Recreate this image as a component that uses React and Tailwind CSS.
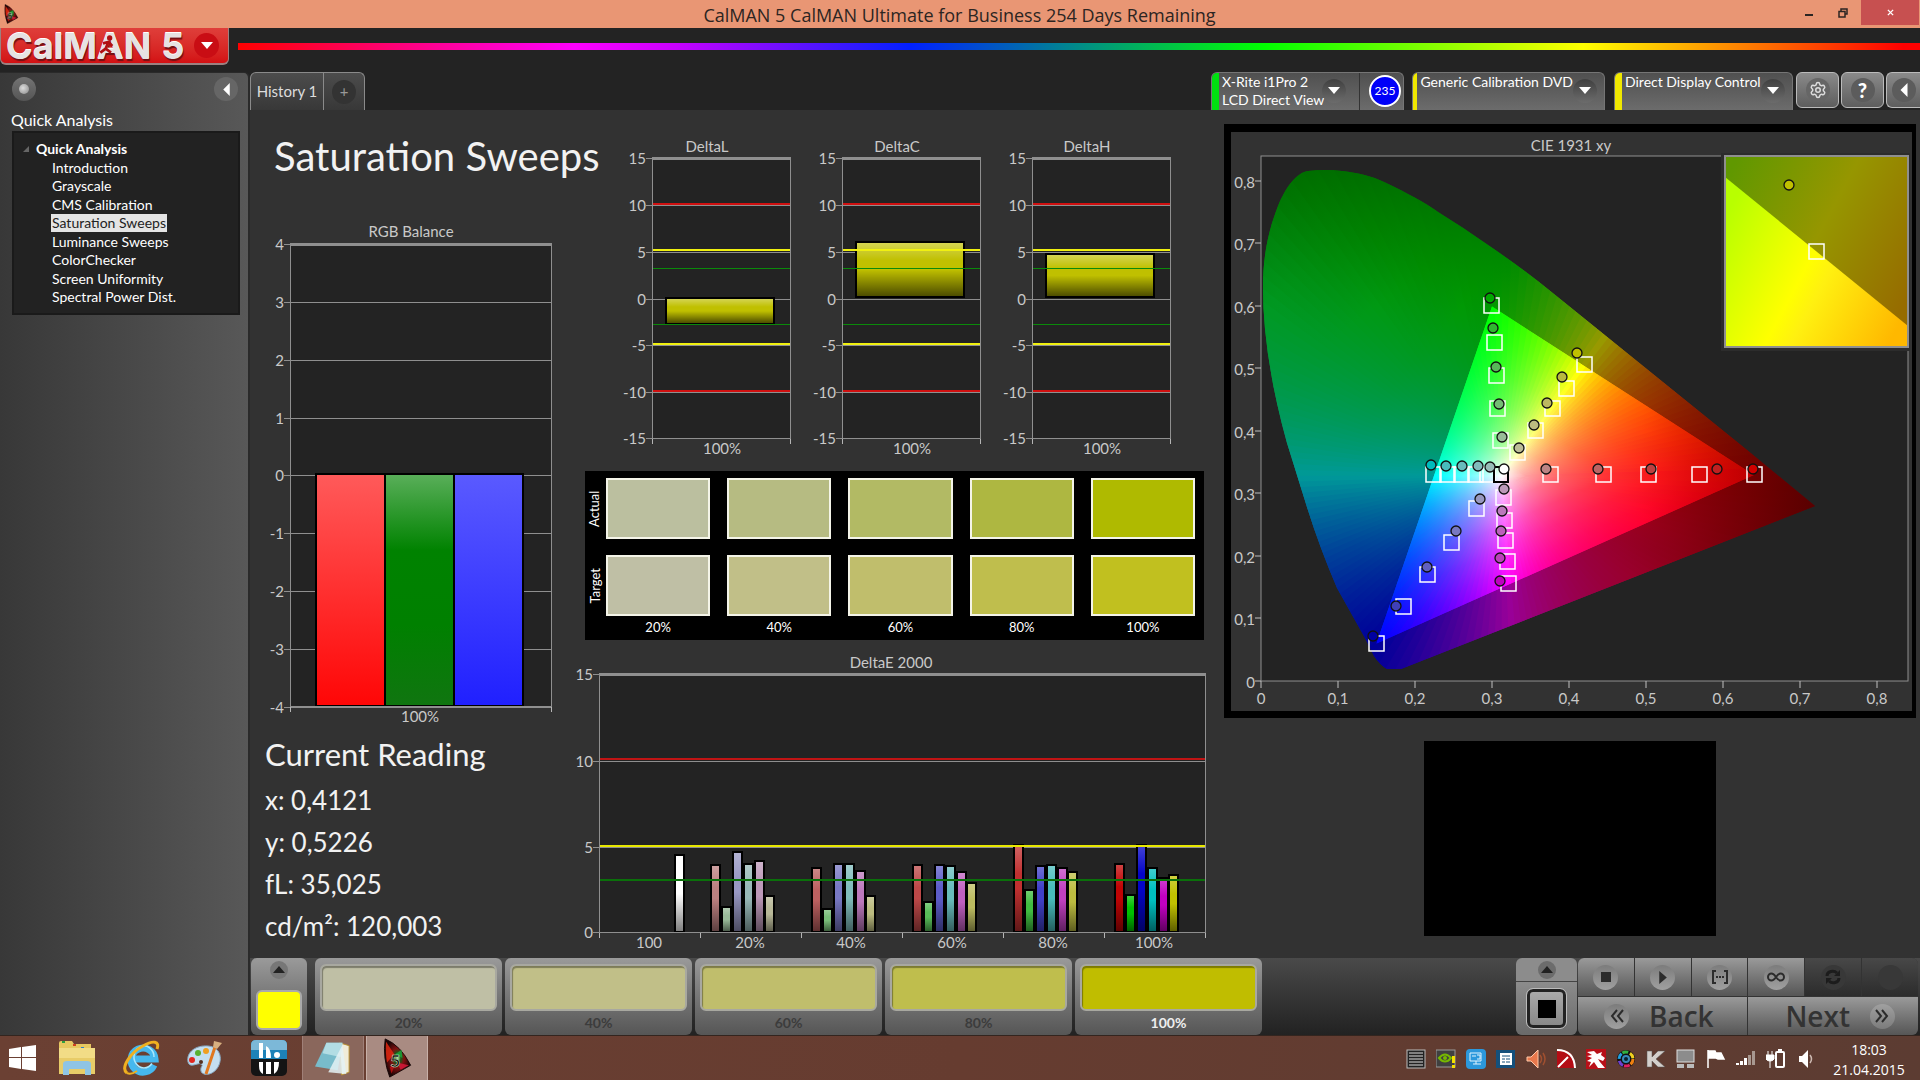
import React from "react";
import { Settings } from "lucide-react";

const PLOT = "#232323";
const LINE = "#8f8f8f";

/* ---------- shared chart parts ---------- */

function Shade({ id, top = 0.32, bottom = 0.6 }) {
  return (
    <linearGradient id={id} x1="0" y1="0" x2="0" y2="1">
      <stop offset="0" stopColor="#fff" stopOpacity={top} />
      <stop offset="0.33" stopColor="#fff" stopOpacity="0" />
      <stop offset="0.5" stopColor="#000" stopOpacity="0" />
      <stop offset="1" stopColor="#000" stopOpacity={bottom} />
    </linearGradient>
  );
}

function Bar({ x, y, w, h, color, shade }) {
  return (
    <g>
      <rect x={x} y={y} width={w} height={h} fill={color} stroke="#000" strokeWidth="2" />
      <rect x={x + 1} y={y + 1} width={w - 2} height={h - 2} fill={`url(#${shade})`} />
    </g>
  );
}

function Axis({ x1, x2, ticks, bottom, xticks }) {
  return (
    <g>
      <rect x={x1} y={ticks[0].y} width={x2 - x1} height={bottom - ticks[0].y} fill={PLOT} />
      {ticks.map((t) => (
        <g key={t.label}>
          <line x1={x1 - 6} x2={x2} y1={t.y} y2={t.y} stroke={LINE} />
          <text x={x1 - 6} y={t.y + 6} textAnchor="end" fill="#c9c9c9" className="text-[15px]">
            {t.label}
          </text>
        </g>
      ))}
      <line x1={x1} x2={x2} y1={ticks[0].y} y2={ticks[0].y} stroke={LINE} strokeWidth="3" />
      {xticks.map((x) => (
        <line key={x} x1={x} x2={x} y1={bottom} y2={bottom + 6} stroke="#b5b5b5" />
      ))}
    </g>
  );
}

function Frame({ x1, x2, top, bottom }) {
  return <path d={`M${x1} ${top}V${bottom}H${x2}V${top}`} fill="none" stroke={LINE} strokeWidth="1" />;
}

/* ---------- RGB balance ---------- */

function RgbBalance() {
  const ticks = [4, 3, 2, 1, 0, -1, -2, -3, -4].map((v) => ({ label: v, y: 24 + (4 - v) * 58 - (v < 1 ? 1 : 0) }));
  return (
    <svg viewBox="0 0 320 504" className="mt-10 block w-full" shapeRendering="crispEdges">
      <defs>
        <linearGradient id="rb-r" x1="0" y1="0" x2="0" y2="1">
          <stop offset="0" stopColor="#ff5a5a" />
          <stop offset="1" stopColor="#ff0606" />
        </linearGradient>
        <linearGradient id="rb-g" x1="0" y1="0" x2="0" y2="1">
          <stop offset="0" stopColor="#5aaf5a" />
          <stop offset="0.33" stopColor="#008200" />
          <stop offset="0.65" stopColor="#008000" />
          <stop offset="1" stopColor="#107510" />
        </linearGradient>
        <linearGradient id="rb-b" x1="0" y1="0" x2="0" y2="1">
          <stop offset="0" stopColor="#5a5aff" />
          <stop offset="1" stopColor="#2020ff" />
        </linearGradient>
      </defs>
      <text x="161" y="17" textAnchor="middle" fill="#c9c9c9" className="text-[15px]">RGB Balance</text>
      <Axis x1={40} x2={301} ticks={ticks} bottom={486} xticks={[40, 301]} />
      <rect x="66" y="254" width="69" height="232" fill="url(#rb-r)" stroke="#000" strokeWidth="2" />
      <rect x="135" y="254" width="69" height="232" fill="url(#rb-g)" stroke="#000" strokeWidth="2" />
      <rect x="204" y="254" width="69" height="232" fill="url(#rb-b)" stroke="#000" strokeWidth="2" />
      <Frame x1={40} x2={301} top={23} bottom={486} />
      <text x="170" y="502" textAnchor="middle" fill="#c9c9c9" className="text-[15px]">100%</text>
    </svg>
  );
}

/* ---------- Delta L / C / H ---------- */

function DeltaChart({ title, y, h }) {
  const ticks = [15, 10, 5, 0, -5, -10, -15].map((v, i) => ({
    label: v,
    y: [22, 69, 116, 163, 209, 256, 302][i],
  }));
  const id = `d-${title}`;
  return (
    <svg viewBox="0 0 190 324" className="block w-1/3" shapeRendering="crispEdges">
      <defs>
        <Shade id={id} />
      </defs>
      <text x="91" y="16" textAnchor="middle" fill="#c9c9c9" className="text-[15px]">{title}</text>
      <Axis x1={36} x2={174} ticks={ticks} bottom={302} xticks={[36, 174]} />
      <Bar x={50} y={y} w={108} h={h} color="#c0c000" shade={id} />
      <rect x="36" y="67" width="138" height="2" fill="#d01010" />
      <rect x="36" y="113" width="138" height="2" fill="#f0f010" />
      <rect x="36" y="132" width="138" height="1" fill="#0a8a0a" />
      <rect x="36" y="188" width="138" height="1" fill="#0a8a0a" />
      <rect x="36" y="207" width="138" height="2" fill="#f0f010" />
      <rect x="36" y="254" width="138" height="2" fill="#d01010" />
      <Frame x1={36} x2={174} top={21} bottom={302} />
      <text x="106" y="318" textAnchor="middle" fill="#c9c9c9" className="text-[15px]">100%</text>
    </svg>
  );
}

/* ---------- swatch comparison ---------- */

const swatches = [
  { label: "20%", actual: "bg-[#bbbf9f]", target: "bg-[#bfbfa5]" },
  { label: "40%", actual: "bg-[#b6bb82]", target: "bg-[#c1bf88]" },
  { label: "60%", actual: "bg-[#b2ba64]", target: "bg-[#c0be6c]" },
  { label: "80%", actual: "bg-[#aeb741]", target: "bg-[#bfbe4d]" },
  { label: "100%", actual: "bg-[#afba00]", target: "bg-[#c1c01f]" },
];

function Swatches() {
  return (
    <div className="mr-[13px] ml-[15px] mt-[11px] flex h-[169px] bg-black text-[13px] text-white">
      <div className="flex w-[21px] flex-col gap-4 pt-[7px]">
        <div className="flex h-[61px] items-center justify-center">
          <span className="-rotate-90">Actual</span>
        </div>
        <div className="flex h-[61px] items-center justify-center">
          <span className="-rotate-90">Target</span>
        </div>
      </div>
      <div className="grid flex-1 grid-cols-5 gap-[17px] pr-[9px] pt-[7px]">
        {swatches.map((s) => (
          <div key={s.label} className="flex flex-col">
            <div className={`h-[61px] border-2 border-[#f4f4e8] ${s.actual}`} />
            <div className={`mt-4 h-[61px] border-2 border-[#f4f4e8] ${s.target}`} />
            <div className="mt-px text-center leading-5">{s.label}</div>
          </div>
        ))}
      </div>
    </div>
  );
}

/* ---------- Delta E 2000 ---------- */

const deGroups = [
  { label: "20%", tops: [215, 257, 202, 214, 211, 246], colors: ["#bc8080", "#98ba98", "#9898c4", "#98b8b8", "#bc98b8", "#b8b898"] },
  { label: "40%", tops: [218, 259, 214, 214, 221, 246], colors: ["#bc6060", "#78bc78", "#7878c4", "#80bcbc", "#bc78bc", "#bcbc80"] },
  { label: "60%", tops: [215, 252, 215, 216, 222, 233], colors: ["#bc4848", "#58bc58", "#5c5cc8", "#68bcbc", "#c060c0", "#bcbc60"] },
  { label: "80%", tops: [195, 240, 216, 215, 218, 222], colors: ["#c03030", "#40bc40", "#4040c8", "#48bcbc", "#c040c0", "#bcbc40"] },
  { label: "100%", tops: [214, 245, 195, 218, 228, 225], colors: ["#c00404", "#00c000", "#0404c8", "#00c0c0", "#c000c0", "#c0c000"] },
];

function DeltaE() {
  const ticks = [
    { label: 15, y: 24 },
    { label: 10, y: 111 },
    { label: 5, y: 197 },
    { label: 0, y: 282 },
  ];
  const offs = [11, 22, 33, 44, 55, 65];
  return (
    <svg viewBox="0 0 647 305" className="mt-[10px] block w-full" shapeRendering="crispEdges">
      <defs>
        <Shade id="de" top={0.25} bottom={0.5} />
      </defs>
      <text x="321" y="18" textAnchor="middle" fill="#c9c9c9" className="text-[15px]">DeltaE 2000</text>
      <Axis x1={29} x2={635} ticks={ticks} bottom={282} xticks={[29, 130, 231, 332, 433, 534, 635]} />
      <Bar x={105} y={205} w={9} h={77} color="#ffffff" shade="de" />
      {deGroups.map((g, i) =>
        g.tops.map((t, j) => (
          <Bar key={g.label + j} x={130 + i * 101 + offs[j]} y={t} w={9} h={282 - t} color={g.colors[j]} shade="de" />
        ))
      )}
      <rect x="29" y="108" width="606" height="2" fill="#c01414" />
      <rect x="29" y="195" width="606" height="2" fill="#e8e800" />
      <rect x="29" y="229" width="606" height="2" fill="#0a700a" />
      <Frame x1={29} x2={635} top={23} bottom={282} />
      {["100", "20%", "40%", "60%", "80%", "100%"].map((l, i) => (
        <text key={l} x={79 + i * 101} y="298" textAnchor="middle" fill="#c9c9c9" className="text-[15px]">{l}</text>
      ))}
    </svg>
  );
}

/* ---------- CIE 1931 chromaticity diagram ---------- */

const OX = 37, OY = 557, SX = 770, SY = 624;
const px = (x, y) => [OX + x * SX, OY - y * SY];
const WHITE = [0.3127, 0.329];
const GAMUT = [[0.64, 0.33], [0.3, 0.6], [0.15, 0.06]];

function chroma(x, y, gain) {
  const X = x / y, Z = (1 - x - y) / y;
  const lin = [
    3.2406 * X - 1.5372 - 0.4986 * Z,
    -0.9689 * X + 1.8758 + 0.0415 * Z,
    0.0557 * X - 0.204 + 1.057 * Z,
  ].map((v) => Math.max(0, v));
  const m = Math.max(...lin);
  const dim = 1 - Math.max(0, x - 0.5) * 1.9 - Math.max(0, y - 0.6) * 1.3;
  return `rgb(${lin.map((v) => Math.round(255 * gain * dim * Math.pow(v / m, 1.1))).join(",")})`;
}

function edgeDistance(dx, dy) {
  let best = Infinity;
  for (let i = 0; i < 3; i++) {
    const [ax, ay] = GAMUT[i];
    const [bx, by] = GAMUT[(i + 1) % 3];
    const ex = bx - ax, ey = by - ay;
    const det = dx * -ey + ex * dy;
    if (Math.abs(det) < 1e-9) continue;
    const rx = ax - WHITE[0], ry = ay - WHITE[1];
    const t = (rx * -ey + ex * ry) / det;
    if (t > 0 && t < best) {
      const u = (dx * ry - dy * rx) / det;
      if (u >= -1e-6 && u <= 1 + 1e-6) best = t;
    }
  }
  return best;
}

const STEP = 2;
const FAR = 0.62;
const wedges = Array.from({ length: 360 / STEP }, (_, i) => {
  const a = (i * STEP * Math.PI) / 180;
  const b = ((i + 2) * STEP * Math.PI) / 180;
  const mid = a + (STEP * Math.PI) / 360;
  const d = [Math.cos(mid), Math.sin(mid)];
  const e = edgeDistance(d[0], d[1]);
  const p = (r, t) => px(WHITE[0] + Math.cos(t) * r, WHITE[1] + Math.sin(t) * r);
  const at = (r, gain) => chroma(WHITE[0] + d[0] * r, Math.max(0.012, WHITE[1] + d[1] * r), gain);
  return {
    i,
    c: px(...WHITE),
    pa: p(FAR, a),
    pb: p(FAR, b),
    mid: p(FAR, mid),
    inner: [0, 0.1, 0.25, 0.45, 0.65, 0.85, 0.95, 1].map((k) => [(k * e) / FAR, at(k * e * 0.999, 1)]),
    outer: [0, 0.2, 0.4, 0.6, 0.8, 1].map((k) => {
      const r = e + (FAR - e) * k;
      return [r / FAR, at(r, 0.6)];
    }),
  };
});

const squares = [
  [267, 181], [270, 218], [272, 251], [273, 284], [276, 316], [293, 328], [311, 306], [328, 284], [342, 264], [360, 240],
  [326, 350], [379, 350], [424, 350], [475, 350], [530, 350], [209, 350], [223, 350], [237, 350], [251, 350], [263, 350],
  [279, 373], [280, 396], [281, 416], [283, 437], [284, 459], [252, 384], [227, 418], [203, 450], [179, 482], [152, 519],
];

const dots = [
  [266, 174, "#00a800"], [269, 204, "#30b830"], [272, 243, "#58b858"], [275, 280, "#74bc74"], [278, 313, "#98bc98"],
  [295, 324, "#bcbc98"], [310, 301, "#bcbc80"], [323, 279, "#bcb860"], [338, 253, "#b8b840"], [353, 229, "#c0c000"],
  [322, 345, "#bc8484"], [374, 345, "#bc6464"], [427, 345, "#bc4040"], [493, 345, "#c02020"], [529, 345, "#d00000"],
  [207, 341, "#00bcbc"], [222, 342, "#48bcbc"], [238, 342, "#68bcbc"], [254, 342, "#80bcbc"], [266, 343, "#98bcb8"],
  [280, 345, "#ffffff"], [280, 365, "#bc98b8"], [278, 387, "#bc78bc"], [277, 407, "#bc60bc"], [276, 434, "#bc40bc"],
  [276, 457, "#c000c0"], [256, 375, "#9898c0"], [232, 407, "#7878c0"], [203, 443, "#6060c0"], [172, 482, "#4040b8"], [149, 512, "#0000a0"],
];

function Wedges({ part }) {
  return wedges.map((w) => (
    <polygon key={w.i} points={`${w.c} ${w.pa} ${w.pb}`} fill={`url(#${part}${w.i})`} />
  ));
}

function CieChart() {
  const tri = GAMUT.map(([x, y]) => px(x, y).join(",")).join(" ");
  const [wx, wy] = px(...WHITE);
  return (
    <svg viewBox="0 0 692 594" className="block w-full">
      <defs>
        {["inner", "outer"].map((part) =>
          wedges.map((w) => (
            <linearGradient key={part + w.i} id={`${part}${w.i}`} gradientUnits="userSpaceOnUse" x1={w.c[0]} y1={w.c[1]} x2={w.mid[0]} y2={w.mid[1]}>
              {w[part].map(([o, c], k) => (
                <stop key={k} offset={o} stopColor={c} />
              ))}
            </linearGradient>
          ))
        )}
        <clipPath id="locus">
          <path d="M39 163C39 130 45 105 54 82C62 63 72 49 84 47Q102 45 118 47C134 49 148 52 160 58C185 70 200 78 214 88Q240 104 264 121Q298 144 330 170L523 326L591 382L177 545H163Q156 541 150 532L141 514L113 464Q95 422 82 380L63 319Q46 258 41 205Q39 184 39 163Z" />
        </clipPath>
        <clipPath id="gamut">
          <polygon points={tri} />
        </clipPath>
        <linearGradient id="in-lo" gradientUnits="userSpaceOnUse" x1="500" y1="95" x2="700" y2="202">
          <stop offset="0" stopColor="#b8ff00" />
          <stop offset="0.42" stopColor="#ffff00" />
          <stop offset="0.52" stopColor="#fff010" />
          <stop offset="0.9" stopColor="#ffb800" />
        </linearGradient>
        <linearGradient id="in-hi" gradientUnits="userSpaceOnUse" x1="510" y1="40" x2="700" y2="142">
          <stop offset="0" stopColor="#609800" />
          <stop offset="0.5" stopColor="#969600" />
          <stop offset="1" stopColor="#966c00" />
        </linearGradient>
      </defs>
      <rect width="692" height="594" fill="#000" />
      <rect x="7" y="8" width="681" height="579" fill="#323232" />
      <text x="347" y="27" textAnchor="middle" fill="#c9c9c9" className="text-[15px]">CIE 1931 xy</text>
      <rect x="37" y="32" width="647" height="525" fill={PLOT} stroke={LINE} />
      <g clipPath="url(#locus)">
        <Wedges part="outer" />
        <g clipPath="url(#gamut)">
          <circle cx={wx} cy={wy} r="30" fill="#fff" />
          <Wedges part="inner" />
        </g>
      </g>
      {[0, 1, 2, 3, 4, 5, 6, 7, 8].map((v) => {
        const label = v ? `0,${v}` : "0";
        const x = OX + v * 77, y = OY - Math.round(v * 62.5);
        return (
          <g key={v}>
            <line x1={x} x2={x} y1="557" y2="564" stroke="#c0c0c0" />
            <text x={x} y="580" textAnchor="middle" fill="#c9c9c9" className="text-[15px]">{label}</text>
            <line x1="31" x2="37" y1={y} y2={y} stroke="#c0c0c0" />
            <text x="31" y={y + 7} textAnchor="end" fill="#c9c9c9" className="text-[15px]">{label}</text>
          </g>
        );
      })}
      {squares.map(([x, y], i) => (
        <rect key={i} x={x - 7} y={y - 7} width="15" height="15" fill="none" stroke="#fff" strokeWidth="1.5" />
      ))}
      <rect x="270" y="343" width="14" height="15" fill="none" stroke="#000" strokeWidth="2" />
      {dots.map(([x, y, c], i) => (
        <circle key={i} cx={x} cy={y} r="5" fill={c} stroke="#111" strokeWidth="1.3" />
      ))}
      <rect x="497" y="29" width="189" height="198" fill="#2c2c2c" />
      <rect x="501" y="32" width="183" height="191" fill="url(#in-hi)" />
      <polygon points="501,53 684,202 684,223 501,223" fill="url(#in-lo)" />
      <rect x="501" y="32" width="183" height="191" fill="none" stroke="#8f8f8f" strokeWidth="2" />
      <rect x="585" y="120" width="15" height="15" fill="none" stroke="#fff" strokeWidth="1.5" />
      <circle cx="565" cy="61" r="5" fill="#c0c000" stroke="#111" strokeWidth="1.3" />
    </svg>
  );
}

/* ---------- header ---------- */

function CalmanMark({ className }) {
  return (
    <svg viewBox="0 0 32 44" className={className} aria-hidden="true">
      <defs>
        <radialGradient id="mk">
          <stop offset="0" stopColor="#b0e8a0" />
          <stop offset="0.25" stopColor="#1a5a1a" />
          <stop offset="0.5" stopColor="#801010" />
          <stop offset="1" stopColor="#1c0505" />
        </radialGradient>
      </defs>
      <path d="M3 1Q0 22 8 43L31 30Q20 8 3 1Z" fill="url(#mk)" stroke="#140404" />
      <path d="M4 4L13 18L5 27Q3 14 4 4Z" fill="#e02810" opacity="0.85" />
      <path d="M14 18L21 13L22 22Z" fill="#18a038" opacity="0.9" />
      <path d="M16 27L29 30L20 35Z" fill="#d01838" opacity="0.9" />
      <path d="M8 32L14 29L10 39Z" fill="#b01010" />
      <text x="14" y="32" textAnchor="middle" className="text-[19px] font-bold" fill="#050505" stroke="#d8e8d0" strokeWidth="0.6">5</text>
    </svg>
  );
}

function TitleBar() {
  return (
    <header className="flex h-7 items-start bg-[#e99674] font-['Open_Sans',sans-serif] text-[#2c2522]">
      <CalmanMark className="ml-px mt-1 h-5 w-5" />
      <h1 className="flex-1 pl-[105px] text-center text-[18px] leading-[30px]">CalMAN 5 CalMAN Ultimate for Business 254 Days Remaining</h1>
      <button aria-label="Minimize" className="flex h-[25px] w-8 items-center justify-center">
        <span className="mt-1 h-[2px] w-2 bg-[#2c2522]" />
      </button>
      <button aria-label="Restore" className="flex h-[25px] w-9 items-center justify-center">
        <svg viewBox="0 0 10 10" className="h-[10px] w-[10px]" fill="none" stroke="#2c2522" strokeWidth="1.5">
          <path d="M1 3.5h6v5.5H1zM3 3V1h6v5H7" />
        </svg>
      </button>
      <button aria-label="Close" className="mr-px flex h-[25px] w-[58px] items-center justify-center bg-[#c75050]">
        <svg viewBox="0 0 8 8" className="h-[7px] w-[7px]" stroke="#fff" strokeWidth="1.6">
          <path d="M1 1l6 6M7 1L1 7" />
        </svg>
      </button>
    </header>
  );
}

function Triangle({ dir, className }) {
  const d = { down: "M0 2H12L6 9Z", up: "M0 9H12L6 2Z", left: "M9 0V12L3 6Z", right: "M3 0V12L10 6Z" }[dir];
  return (
    <svg viewBox="0 0 12 12" className={className} fill="currentColor" aria-hidden="true">
      <path d={d} />
    </svg>
  );
}

function Brand() {
  return (
    <div className="flex h-11 items-start">
      <button className="flex h-[37px] w-[229px] items-center rounded-b-md border-x border-b-2 border-[#9c8080] bg-gradient-to-b from-[#df3e3a] to-[#d30f13] pl-[5px] text-white">
        <span className="flex w-[184px] gap-[10px] whitespace-nowrap font-['Inter',sans-serif] text-[36px] font-bold leading-[30px] text-[#e6e2e2] [text-shadow:0_-1px_0_#fff,1px_2px_1px_#701014]">
          <span className="relative">
            CalMAN
            <svg viewBox="0 0 12 16" className="absolute left-[93px] top-[4px] h-[22px] w-4" fill="none" stroke="#b01014" strokeWidth="2" aria-hidden="true">
              <circle cx="8" cy="2" r="1" fill="#b01014" />
              <path d="M3 6L7 5L10 8M7 5L5 10L9 13M5 10L1 13" />
            </svg>
          </span>
          <span>5</span>
        </span>
        <span className="ml-1 flex h-[25px] w-[25px] items-center justify-center rounded-full bg-[#c90d14]">
          <Triangle dir="down" className="h-3 w-3" />
        </span>
      </button>
      <div className="ml-[9px] mt-[15px] h-[7px] flex-1 bg-[linear-gradient(90deg,#ff0000_0%,#ff00ff_20%,#c800ff_26%,#0020ff_40%,#008c88_50%,#00ff00_61%,#ffff00_80%,#ff0000_99%)]" />
    </div>
  );
}

/* ---------- sidebar ---------- */

const pages = ["Introduction", "Grayscale", "CMS Calibration", "Saturation Sweeps", "Luminance Sweeps", "ColorChecker", "Screen Uniformity", "Spectral Power Dist."];

function Sidebar() {
  return (
    <aside className="flex w-[250px] shrink-0 flex-col rounded-tr-md border-r-2 border-t border-[#2a2a2a] bg-gradient-to-r from-[#383838] to-[#585858] text-white">
      <div className="flex items-center justify-between pl-3 pr-[10px] pt-1">
        <button aria-label="Options" className="flex h-6 w-6 items-center justify-center rounded-full bg-gradient-to-b from-[#747474] to-[#555]">
          <span className="h-[10px] w-[10px] rounded-full bg-[radial-gradient(circle_at_40%_40%,#ddd,#888)]" />
        </button>
        <button aria-label="Collapse sidebar" className="flex h-6 w-6 items-center justify-center rounded-full bg-[#666]">
          <Triangle dir="left" className="h-[13px] w-[13px]" />
        </button>
      </div>
      <h2 className="mt-[9px] pl-[11px] text-[16px] leading-5">Quick Analysis</h2>
      <nav className="mx-3 mt-px h-[184px] w-[228px] border-2 border-[#1a1a1a] bg-[#222] pt-[7px]">
        <div className="flex items-center pl-[9px] text-[14px] font-bold leading-[18px]">
          <svg viewBox="0 0 6 6" className="mr-[7px] h-[6px] w-[6px]"><path d="M6 0V6H0Z" fill="#666" /></svg>
          Quick Analysis
        </div>
        <ul className="mt-px flex h-[147px] flex-col justify-between pl-[37px] text-[14px]">
          {pages.map((p) => (
            <li key={p} className="flex h-[18px]">
              <a href="#" className={p === "Saturation Sweeps" ? "bg-[#e4e4e4] px-px leading-[18px] text-[#222]" : "px-px leading-[18px]"}>{p}</a>
            </li>
          ))}
        </ul>
      </nav>
    </aside>
  );
}

/* ---------- tabs and devices ---------- */

function Drop() {
  return (
    <span className="mt-1 flex h-6 w-6 shrink-0 items-center justify-center rounded-full bg-gradient-to-b from-[#404040] to-[#6c6c6c]">
      <Triangle dir="down" className="h-3 w-3" />
    </span>
  );
}

const deviceBox = "flex h-[38px] items-start rounded-t-md border-x border-t border-[#757575] bg-gradient-to-b from-[#505050] to-[#6c6c6c] text-left text-[14px] leading-[18px] text-white overflow-hidden";
const squareBtn = "flex h-9 items-center justify-center rounded-md border border-[#bbb] bg-gradient-to-b from-[#8a8a8a] to-[#5e5e5e]";

function TabRow() {
  return (
    <div className="flex h-[38px] items-start text-[#ddd]">
      <div className="flex h-[38px] rounded-t-md border-x border-t border-[#8a8a8a] bg-gradient-to-b from-[#4c4c4c] to-[#383838]">
        <button className="w-[73px] border-r border-[#8a8a8a] text-center text-[15px]">History 1</button>
        <button aria-label="Add tab" className="flex w-10 items-center justify-center">
          <span className="flex h-6 w-6 items-center justify-center rounded-full bg-[#333] text-[15px] text-[#999]">+</span>
        </button>
      </div>
      <div className="flex-1" />
      <div className={`${deviceBox} w-[193px]`}>
        <span className="h-full w-[7px] bg-[#00e010]" />
        <button className="flex h-full w-[141px] justify-between border-r border-[#333] pl-[3px] pr-[13px] text-left">
          <span className="whitespace-nowrap">X-Rite i1Pro 2<br />LCD Direct View</span>
          <span className="-ml-4 pt-[2px]"><Drop /></span>
        </button>
        <button className="ml-[9px] mt-[2px] flex h-8 w-8 items-center justify-center rounded-full border-2 border-white bg-[#0000f8] text-[12px]">235</button>
      </div>
      <button className={`${deviceBox} ml-2 w-[193px]`}>
        <span className="h-full w-[7px] bg-[#f0e800]" />
        <span className="flex-1 whitespace-nowrap pl-[3px]">Generic Calibration DVD</span>
        <span className="pr-[7px] pt-[2px]"><Drop /></span>
      </button>
      <button className={`${deviceBox} ml-[9px] w-[179px]`}>
        <span className="h-full w-[7px] bg-[#f0e800]" />
        <span className="flex-1 whitespace-nowrap pl-[3px]">Direct Display Control</span>
        <span className="pr-[7px] pt-[2px]"><Drop /></span>
      </button>
      <button aria-label="Settings" className={`${squareBtn} ml-[3px] w-[43px]`}>
        <span className="flex h-6 w-6 items-center justify-center rounded-full bg-[#666]"><Settings className="h-[18px] w-[18px] text-[#ddd]" /></span>
      </button>
      <button aria-label="Help" className={`${squareBtn} ml-[2px] w-[43px]`}>
        <span className="flex h-6 w-6 items-center justify-center rounded-full bg-[#5c5c5c] text-[20px] font-black text-white">?</span>
      </button>
      <button aria-label="Collapse panel" className={`${squareBtn} ml-[2px] w-[34px] rounded-r-none border-r-0`}>
        <span className="flex h-6 w-6 items-center justify-center rounded-full bg-[#5c5c5c] text-white"><Triangle dir="left" className="h-[14px] w-[14px]" /></span>
      </button>
    </div>
  );
}

/* ---------- bottom toolbar ---------- */

const steps = [
  { label: "20%", color: "bg-[#bfbfa5]" },
  { label: "40%", color: "bg-[#c1bf88]" },
  { label: "60%", color: "bg-[#c0be6c]" },
  { label: "80%", color: "bg-[#bfbe4d]" },
  { label: "100%", color: "bg-[#c0bd00]" },
];

const steel = "bg-gradient-to-b from-[#9a9a9a] to-[#565656]";
const knob = "flex h-[25px] w-[25px] items-center justify-center rounded-full bg-gradient-to-b from-[#7c7c7c] to-[#a0a0a0] text-[#2c2c2c]";

function Toolbar() {
  return (
    <footer className="flex h-[77px] items-stretch bg-gradient-to-b from-[#4a4a4a] to-[#222] pl-px">
      <div className={`flex w-14 flex-col items-center rounded-md ${steel}`}>
        <button aria-label="Expand" className="mt-[3px] flex h-[18px] w-[18px] items-center justify-center rounded-full bg-[#777] text-[#222]">
          <Triangle dir="up" className="h-3 w-3" />
        </button>
        <button aria-label="Selected colour" className="mt-[11px] h-10 w-[46px] rounded-md border-2 border-[#aaa] bg-[#ffff00]" />
      </div>
      <div className="ml-2 flex gap-[3px]">
        {steps.map((s) => (
          <button key={s.label} className={`flex w-[187px] flex-col rounded-md px-[5px] pt-[6px] ${steel}`}>
            <span className={`h-[47px] w-full rounded-md border-2 border-[#a8a8a0] shadow-[inset_1px_2px_1px_rgba(0,0,0,0.35)] ${s.color}`} />
            <span className={s.label === "100%" ? "w-full text-center text-[14px] font-bold leading-6 text-[#eee]" : "w-full text-center text-[14px] font-bold leading-6 text-[#3c3c3c]"}>{s.label}</span>
          </button>
        ))}
      </div>
      <div className="flex-1" />
      <div className="flex w-[61px] flex-col gap-px overflow-hidden rounded-md bg-[#444]">
        <button aria-label="Expand pattern" className="flex h-[23px] items-center justify-center bg-[#8c8c8c]">
          <span className="flex h-[18px] w-[18px] items-center justify-center rounded-full bg-[#6c6c6c] text-[#222]"><Triangle dir="up" className="h-3 w-3" /></span>
        </button>
        <button aria-label="Pattern" className="flex flex-1 items-center justify-center bg-gradient-to-b from-[#8c8c8c] to-[#6a6a6a]">
          <span className="flex h-[39px] w-[39px] items-center justify-center rounded-md border-[3px] border-[#222] bg-gradient-to-b from-[#aaa] to-[#888] outline outline-[#bbb]">
            <span className="h-[18px] w-[18px] bg-black" />
          </span>
        </button>
      </div>
      <div className="ml-px mr-[2px] grid w-[340px] grid-cols-6 grid-rows-2 gap-px overflow-hidden rounded-md bg-[#333]">
        <button aria-label="Stop" className={`flex items-center justify-center ${steel}`}><span className={knob}><span className="h-[10px] w-[10px] bg-[#2c2c2c]" /></span></button>
        <button aria-label="Play" className={`flex items-center justify-center ${steel}`}><span className={knob}><Triangle dir="right" className="h-[13px] w-[13px]" /></span></button>
        <button aria-label="Series" className={`flex items-center justify-center ${steel}`}>
          <span className={knob}>
            <svg viewBox="0 0 18 14" className="h-[14px] w-[18px]" fill="none" stroke="currentColor" strokeWidth="2"><path d="M5 1H2V13H5M13 1h3V13h-3M5 7h2M8 7h2M11 7h2" /></svg>
          </span>
        </button>
        <button aria-label="Continuous" className={`flex items-center justify-center ${steel}`}>
          <span className={knob}>
            <svg viewBox="0 0 18 10" className="h-[10px] w-[18px]" fill="none" stroke="currentColor" strokeWidth="2"><path d="M9 5C7 2 6 1.500 4.500 1.500a3.500 3.500 0 0 0 0 7C6 8.500 7 8 9 5s3-3.500 4.500-3.500a3.500 3.500 0 0 1 0 7C12 8.500 11 8 9 5Z" /></svg>
          </span>
        </button>
        <button aria-label="Refresh" className="flex items-center justify-center bg-gradient-to-b from-[#484848] to-[#2c2c2c]">
          <span className="flex h-[25px] w-[25px] items-center justify-center rounded-full bg-[#383838] text-[#1c1c1c]">
            <svg viewBox="0 0 16 16" className="h-4 w-4" fill="none" stroke="currentColor" strokeWidth="3"><path d="M2 7C2 2 9 1 12 4M14 9c0 5-7 6-10 3" /><path d="M15 1v6H9zM1 15V9h6z" fill="currentColor" stroke="none" /></svg>
          </span>
        </button>
        <button aria-label="Record" className="flex items-center justify-center bg-gradient-to-b from-[#484848] to-[#2c2c2c]"><span className="h-[25px] w-[25px] rounded-full bg-[#383838]" /></button>
        <button className={`col-span-3 flex items-center gap-5 pl-[26px] text-[#333] font-['Open_Sans',sans-serif] ${steel}`}>
          <span className={knob}><Chevrons /></span>
          <span className="text-[28px] font-semibold leading-8">Back</span>
        </button>
        <button className={`col-span-3 flex items-center justify-end gap-5 pr-[23px] text-[#333] font-['Open_Sans',sans-serif] ${steel}`}>
          <span className="text-[28px] font-semibold leading-8">Next</span>
          <span className={`${knob} rotate-180`}><Chevrons /></span>
        </button>
      </div>
    </footer>
  );
}

function Chevrons() {
  return (
    <svg viewBox="0 0 14 14" className="h-[14px] w-[14px]" fill="none" stroke="currentColor" strokeWidth="2">
      <path d="M7 1L2 7L7 13M13 1L8 7L13 13" />
    </svg>
  );
}

/* ---------- desktop taskbar ---------- */

function TrayIcon({ label, children }) {
  return (
    <button aria-label={label} className="h-5 w-5">
      <svg viewBox="0 0 20 20" className="h-5 w-5">{children}</svg>
    </button>
  );
}

function Taskbar() {
  return (
    <div className="flex h-[45px] items-stretch border-t border-[#33251f] bg-gradient-to-r from-[#6b4033] via-[#663c30] to-[#5c3c32] text-white">
      <button aria-label="Start" className="ml-[9px] flex w-7 items-center">
        <svg viewBox="0 0 28 28" className="h-7 w-7" fill="#fff"><path d="M0 5L12 3V13H0ZM13 3L27 1V13H13ZM0 14H12V25L0 23ZM13 14H27V27L13 25Z" /></svg>
      </button>
      <button aria-label="File Explorer" className="ml-[22px] flex w-9 items-center">
        <svg viewBox="0 0 36 36" className="h-9 w-9">
          <path d="M0 3Q0 1 2 1H13L15 4H32V10H0Z" fill="#e8c860" />
          <path d="M3 1h3v2H3z" fill="#30a040" /><path d="M14 4h3v2h-3z" fill="#d04020" /><path d="M22 7h3v2h-3z" fill="#3080c8" />
          <path d="M0 8H36V34H0Z" fill="#f2dc86" />
          <path d="M0 18H36V34H0Z" fill="#e8cc68" />
          <path d="M4 35V24Q4 21 8 21H28Q32 21 32 24V35H26V29H10V35Z" fill="#8fc4e4" />
        </svg>
      </button>
      <button aria-label="Internet Explorer" className="ml-7 flex w-[37px] items-center">
        <svg viewBox="0 0 37 36" className="h-9 w-[37px]" fill="none">
          <path d="M31 25A12 12 0 1 1 32 19H12" stroke="#46b8ee" strokeWidth="7" />
          <path d="M29 23.500A10 11 0 1 1 31 17" stroke="#a8e8ff" strokeWidth="1.5" />
          <path d="M4 33C-3 28 8 12 20 6C30 0 37 1 34 9" stroke="#f0b020" strokeWidth="3" />
          <path d="M4 33Q8 35 14 31" stroke="#f0b020" strokeWidth="2" />
        </svg>
      </button>
      <button aria-label="Paint" className="ml-[26px] flex w-9 items-center">
        <svg viewBox="0 0 36 36" className="h-9 w-9">
          <path d="M2 22C0 12 10 5 22 6C34 7 37 18 32 27C27 36 16 36 15 31C14 26 18 26 15 24C12 22 4 29 2 22Z" fill="#c4dff0" stroke="#88aac4" />
          <circle cx="6" cy="20" r="3" fill="#e02820" /><circle cx="12" cy="13" r="3" fill="#58b030" /><circle cx="20" cy="11" r="3" fill="#f0a020" />
          <circle cx="15" cy="22" r="2" fill="#553020" />
          <path d="M20 34L29 7" stroke="#e07820" strokeWidth="3" /><path d="M27 7L28 1L36 3L31 9Z" fill="#d8b080" />
        </svg>
      </button>
      <button aria-label="HWiNFO" className="ml-[29px] flex w-9 items-center">
        <svg viewBox="0 0 36 36" className="h-9 w-9">
          <rect width="36" height="36" rx="5" fill="#141414" />
          <path d="M0 19V5Q0 0 5 0H31Q36 0 36 5V19Z" fill="#1d82b8" /><path d="M0 10V5Q0 0 5 0H31Q36 0 36 5V10Z" fill="#7cb8d8" />
          <path d="M8 3h4v15H8zM15 6q5 2 5 12h-5zM8 22h4v12q-4-2-4-8zM15 22h5v12h-5zM23 22h5q0 9-5 12z" fill="#fff" /><circle cx="26" cy="15" r="3" fill="#fff" />
        </svg>
      </button>
      <button aria-label="Notepad" className="ml-[15px] flex w-[62px] items-center justify-center border-x border-[#a08078] bg-[#8a675c]">
        <svg viewBox="0 0 38 38" className="h-9 w-9">
          <path d="M26 3L36 6V34L28 37Z" fill="#f0ecd8" stroke="#b89030" /><path d="M12 3H29L24 32L0 28Z" fill="#78bccb" />
          <path d="M12 3H29L27 18L8 14Z" fill="#b2dde4" /><path d="M29 5L33 36L14 34Z" fill="#e4f2f4" opacity="0.85" />
        </svg>
      </button>
      <button aria-label="CalMAN" className="ml-[2px] flex w-[62px] items-center justify-center border-x border-[#c8b0a8] bg-[#a98b82]">
        <CalmanMark className="h-10 w-9" />
      </button>
      <div className="flex-1" />
      <div className="flex items-center gap-[10px] pt-[2px]">
        <TrayIcon label="Device"><rect x="1" y="1" width="18" height="18" fill="#222" stroke="#bbb" /><path d="M3 4h14M3 7h14M3 10h14M3 13h14M3 16h14" stroke="#ddd" /></TrayIcon>
        <TrayIcon label="NVIDIA"><rect x="0" y="1" width="19" height="17" fill="#404040" stroke="#999" /><path d="M3 9Q9 2 15 9Q9 16 3 9Z" fill="none" stroke="#76b900" strokeWidth="2" /><circle cx="9" cy="9" r="2" fill="#76b900" /><path d="M16 7h3v7h-3zM16 16h3v3h-3z" fill="#f4e000" /></TrayIcon>
        <TrayIcon label="Intel graphics"><rect width="20" height="20" rx="4" fill="#2c98dc" /><path d="M4 4h11v8H4zM7 15h8M10 12v3M6 7h4M11 6h3v4h-3" fill="none" stroke="#e0f4ff" /></TrayIcon>
        <TrayIcon label="Documents"><rect x="0" y="1" width="19" height="18" fill="#14507c" /><rect x="4" y="4" width="12" height="12" fill="#fff" /><path d="M6 7h8M6 10h3M6 13h3M10 10h4M10 13h4" stroke="#14507c" /></TrayIcon>
        <TrayIcon label="Audio"><path d="M1 8h4l7-7v18l-7-7H1z" fill="#e8784c" stroke="#ffc8a8" /><path d="M14 6q3 4 0 8M17 4q4 6 0 12" fill="none" stroke="#a05030" strokeWidth="1.5" /></TrayIcon>
        <TrayIcon label="Gauge"><path d="M1 1h8q10 3 10 18H1z" fill="#b40c14" /><path d="M1 1q17 0 18 18M2 18L12 8" fill="none" stroke="#fff" strokeWidth="2" /></TrayIcon>
        <TrayIcon label="Dragon"><rect width="20" height="20" fill="#b81018" /><path d="M1 3L8 2L11 5L16 3L15 6L19 9L17 12L12 10L14 13L19 19H12L8 13L3 18L5 13L1 12L6 9L1 7L6 6Z" fill="#fff" /></TrayIcon>
        <TrayIcon label="Colour wheel"><circle cx="10" cy="10" r="9" fill="#111" /><g fill="none" strokeWidth="3" strokeDasharray="6 38"><circle cx="10" cy="10" r="7" stroke="#f08010" /><circle cx="10" cy="10" r="7" stroke="#e02060" strokeDashoffset="-7" /><circle cx="10" cy="10" r="7" stroke="#7040d0" strokeDashoffset="-14" /><circle cx="10" cy="10" r="7" stroke="#20a0e0" strokeDashoffset="-22" /><circle cx="10" cy="10" r="7" stroke="#30b040" strokeDashoffset="-29" /><circle cx="10" cy="10" r="7" stroke="#f0d020" strokeDashoffset="-37" /></g><circle cx="10" cy="10" r="4" fill="#3888b8" /><circle cx="10" cy="10" r="2" fill="#08202c" /></TrayIcon>
        <TrayIcon label="Klipper"><path d="M1 2h5v6l6-6h7l-9 8 9 8h-7l-6-6v6H1z" fill="#d4d0cc" stroke="#555" strokeWidth="0.5" /></TrayIcon>
        <TrayIcon label="Touchpad"><rect x="1" y="1" width="17" height="12" fill="#8c8c8c" stroke="#ddd" /><rect x="1" y="15" width="7" height="4" fill="#bbb" /><rect x="11" y="15" width="7" height="4" fill="#bbb" /></TrayIcon>
        <TrayIcon label="Action center"><path d="M2 1v18M3 2h6l1 2h5l3 6h-6l-2-1H3z" fill="#fff" stroke="#fff" strokeWidth="1.5" /></TrayIcon>
        <TrayIcon label="Network"><path d="M0 14h3v2H0zM4 12h3v4H4zM8 9h3v7H8z" fill="#fff" /><path d="M12 6h3v10h-3zM16 2h3v14h-3z" fill="#a89890" /></TrayIcon>
        <TrayIcon label="Power"><path d="M2 2v4M6 2v4M0 6h8v4q-1 2-4 2t-4-2zM4 11v8" stroke="#fff" fill="#fff" /><rect x="10" y="3" width="8" height="15" rx="1" fill="none" stroke="#fff" strokeWidth="2" /><path d="M12 0h4v2h-4z" fill="#fff" /></TrayIcon>
        <TrayIcon label="Volume"><path d="M3 7h3l6-6v18l-6-6H3z" fill="#fff" /><path d="M14 6q3 4 0 8" fill="none" stroke="#ccb8b0" strokeWidth="1.5" /></TrayIcon>
      </div>
      <div className="ml-4 mr-[14px] w-[74px] pt-1 text-center font-['Open_Sans',sans-serif] text-[14px] leading-5">
        <div>18:03</div>
        <div>21.04.2015</div>
      </div>
    </div>
  );
}

/* ---------- page ---------- */

export default function App() {
  return (
    <div className="flex min-h-screen flex-col overflow-hidden bg-[#232323] font-['Lato',sans-serif]">
      <TitleBar />
      <Brand />
      <div className="flex flex-1">
        <Sidebar />
        <div className="flex min-w-0 flex-1 flex-col">
          <TabRow />
          <main className="grid flex-1 grid-cols-[minmax(0,320fr)_minmax(0,647fr)_minmax(0,703fr)] items-start bg-[#323232] text-[#f2f2f2]">
            <section>
              <h2 className="whitespace-nowrap pl-6 pt-[22px] text-[40px] leading-[48px]">Saturation Sweeps</h2>
              <RgbBalance />
              <div className="mt-[9px] pl-[15px] text-[26px] leading-[42px]">
                <h3 className="mb-1 text-[31px] leading-[42px]">Current Reading</h3>
                <p>x: 0,4121</p>
                <p>y: 0,5226</p>
                <p>fL: 35,025</p>
                <p>cd/m²: 120,003</p>
              </div>
            </section>
            <section className="pt-[26px]">
              <div className="flex pl-[46px] pr-[31px]">
                <DeltaChart title="DeltaL" y={162} h={26} />
                <DeltaChart title="DeltaC" y={106} h={55} />
                <DeltaChart title="DeltaH" y={118} h={43} />
              </div>
              <Swatches />
              <DeltaE />
            </section>
            <section className="pl-[7px] pr-1 pt-[14px]">
              <CieChart />
              <div className="mx-auto mt-[23px] h-[195px] w-[292px] bg-black" />
            </section>
          </main>
          <Toolbar />
        </div>
      </div>
      <Taskbar />
    </div>
  );
}
